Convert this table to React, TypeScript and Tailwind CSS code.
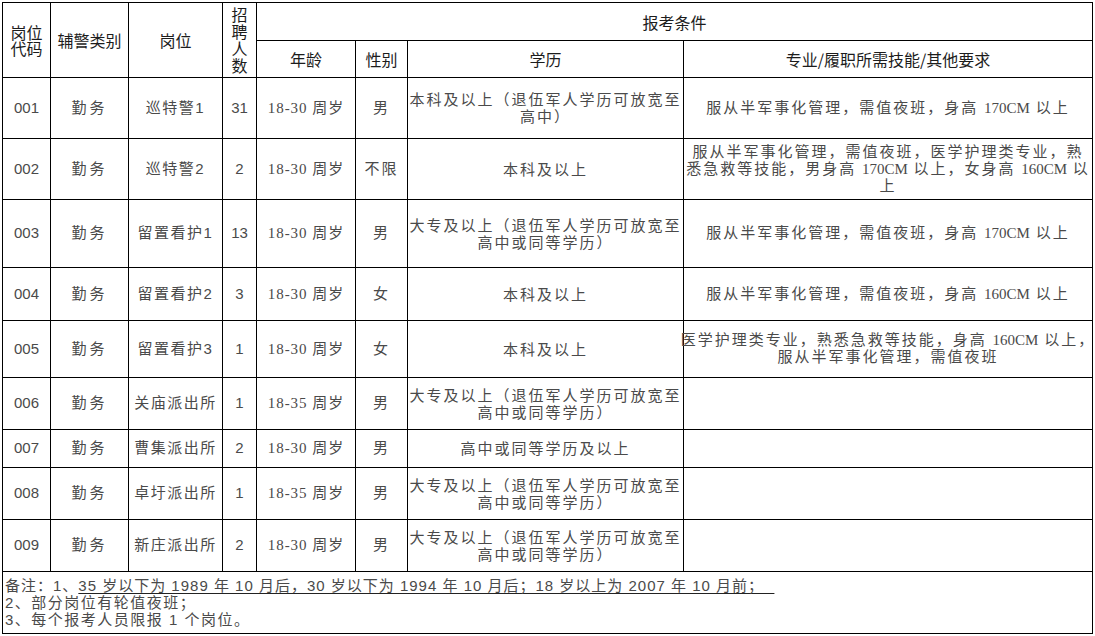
import React from "react";

type Row = {
  code: string;
  type: string;
  post: string;
  n: string;
  age: string;
  sex: string;
  edu: string[];
  req: string[];
};

const rows: Row[] = [
  { code: "001", type: "勤务", post: "巡特警1", n: "31", age: "18-30 周岁", sex: "男", edu: ["本科及以上（退伍军人学历可放宽至", "高中）"], req: ["服从半军事化管理，需值夜班，身高 170CM 以上"] },
  { code: "002", type: "勤务", post: "巡特警2", n: "2", age: "18-30 周岁", sex: "不限", edu: ["本科及以上"], req: ["服从半军事化管理，需值夜班，医学护理类专业，熟", "悉急救等技能，男身高 170CM 以上，女身高 160CM 以", "上"] },
  { code: "003", type: "勤务", post: "留置看护1", n: "13", age: "18-30 周岁", sex: "男", edu: ["大专及以上（退伍军人学历可放宽至", "高中或同等学历）"], req: ["服从半军事化管理，需值夜班，身高 170CM 以上"] },
  { code: "004", type: "勤务", post: "留置看护2", n: "3", age: "18-30 周岁", sex: "女", edu: ["本科及以上"], req: ["服从半军事化管理，需值夜班，身高 160CM 以上"] },
  { code: "005", type: "勤务", post: "留置看护3", n: "1", age: "18-30 周岁", sex: "女", edu: ["本科及以上"], req: ["医学护理类专业，熟悉急救等技能，身高 160CM 以上，", "服从半军事化管理，需值夜班"] },
  { code: "006", type: "勤务", post: "关庙派出所", n: "1", age: "18-35 周岁", sex: "男", edu: ["大专及以上（退伍军人学历可放宽至", "高中或同等学历）"], req: [] },
  { code: "007", type: "勤务", post: "曹集派出所", n: "2", age: "18-30 周岁", sex: "男", edu: ["高中或同等学历及以上"], req: [] },
  { code: "008", type: "勤务", post: "卓圩派出所", n: "1", age: "18-35 周岁", sex: "男", edu: ["大专及以上（退伍军人学历可放宽至", "高中或同等学历）"], req: [] },
  { code: "009", type: "勤务", post: "新庄派出所", n: "2", age: "18-30 周岁", sex: "男", edu: ["大专及以上（退伍军人学历可放宽至", "高中或同等学历）"], req: [] },
];

const cell = "bg-white flex items-center justify-center text-center overflow-visible";
const head = `${cell} text-[16px] text-[#1c1c1c] font-[family-name:'Noto_Sans_CJK_SC',sans-serif]`;
const sans = "font-[family-name:'Liberation_Sans','Noto_Sans_CJK_SC',sans-serif]";
const serif = "font-[family-name:'Liberation_Serif','Noto_Sans_CJK_SC',serif]";
const body = "text-[15px] text-[#4a4a4a]";

function Rich({ text }: { text: string }) {
  const parts = text.split(/(\d+CM)/);
  return (
    <>
      {parts.map((p, i) =>
        /^\d+CM$/.test(p) ? (
          <span key={i} className="tracking-[0px]">
            {p}
          </span>
        ) : (
          <React.Fragment key={i}>{p}</React.Fragment>
        )
      )}
    </>
  );
}

function Lines({ lines }: { lines: string[] }) {
  return (
    <div className="leading-[17px] whitespace-nowrap">
      {lines.map((l, i) => (
        <div key={i}>
          <Rich text={l} />
        </div>
      ))}
    </div>
  );
}

export default function App() {
  return (
    <div className="w-[1095px] h-[636px] bg-white pl-[2px] pt-[2px]">
      <div className="inline-grid bg-black p-px gap-px grid-cols-[47px_77px_93px_33px_98px_51px_275px_408px] grid-rows-[37px_36px_60px_60px_67px_52px_56px_51px_37px_51px_51px_61px]">
        <div className={`${head} row-span-2 leading-[16px]`}>
          <div>
            岗位
            <br />
            代码
          </div>
        </div>
        <div className={`${head} row-span-2`}>辅警类别</div>
        <div className={`${head} row-span-2`}>岗位</div>
        <div className={`${head} row-span-2 leading-[17px]`}>
          <div>
            招<br />聘<br />人<br />数
          </div>
        </div>
        <div className={`${head} col-span-4`}>报考条件</div>
        <div className={head}>年龄</div>
        <div className={head}>性别</div>
        <div className={head}>学历</div>
        <div className={head}>专业/履职所需技能/其他要求</div>

        {rows.map((r) => (
          <React.Fragment key={r.code}>
            <div className={`${cell} ${body} ${sans}`}>{r.code}</div>
            <div className={`${cell} ${body} ${sans} tracking-[3px]`}>{r.type}</div>
            <div className={`${cell} ${body} ${sans} tracking-[1.5px] whitespace-nowrap`}>{r.post}</div>
            <div className={`${cell} ${body} ${sans}`}>{r.n}</div>
            <div className={`${cell} ${body} ${serif} tracking-[1px] whitespace-nowrap`}>{r.age}</div>
            <div className={`${cell} ${body} ${sans} tracking-[2px]`}>{r.sex}</div>
            <div className={`${cell} ${body} ${sans} tracking-[2px]`}>
              <Lines lines={r.edu} />
            </div>
            <div className={`${cell} ${body} ${serif} tracking-[2px]`}>
              <Lines lines={r.req} />
            </div>
          </React.Fragment>
        ))}

        <div className={`bg-white col-span-8 flex items-center text-[15px] text-[#4a4a4a] ${sans} tracking-[1px] leading-[17px] pl-[2px]`}>
          <div className="whitespace-nowrap">
            <div>
              备注：1、
              <span className="underline underline-offset-[2px] decoration-[#222]">
                35 岁以下为 1989 年 10 月后，30 岁以下为 1994 年 10 月后；18 岁以上为 2007 年 10 月前；&nbsp;&nbsp;
              </span>
            </div>
            <div className="tracking-[1.5px]">2、部分岗位有轮值夜班；</div>
            <div className="tracking-[1.5px]">3、每个报考人员限报 1 个岗位。</div>
          </div>
        </div>
      </div>
    </div>
  );
}
